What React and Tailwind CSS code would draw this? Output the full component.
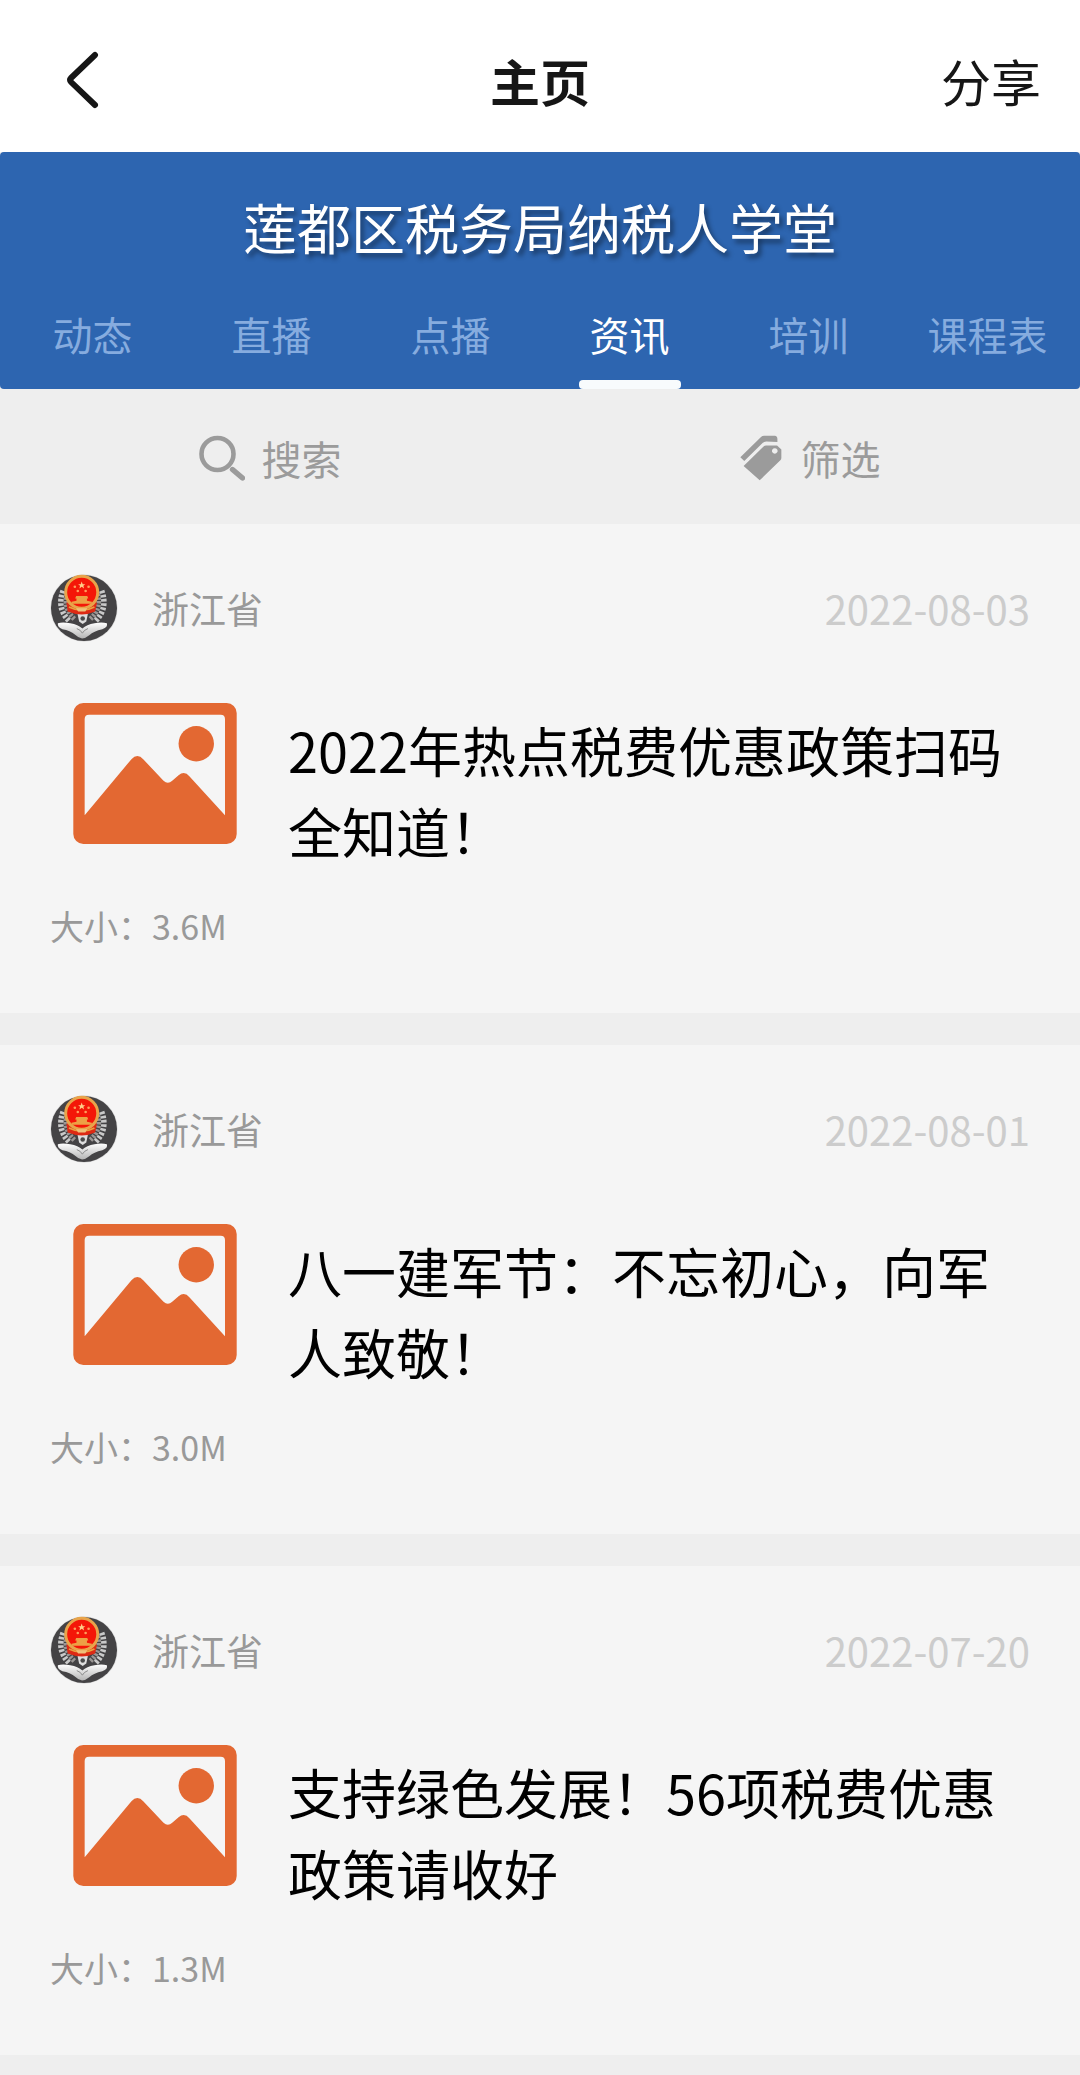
import React from "react";

const TABS = ["动态", "直播", "点播", "资讯", "培训", "课程表"];

const ARTICLES = [
  { source: "浙江省", date: "2022-08-03", title: "2022年热点税费优惠政策扫码全知道！", size: "3.6M" },
  { source: "浙江省", date: "2022-08-01", title: "八一建军节：不忘初心，向军人致敬！", size: "3.0M" },
  { source: "浙江省", date: "2022-07-20", title: "支持绿色发展！56项税费优惠政策请收好", size: "1.3M" },
];

function BackIcon() {
  return (
    <svg viewBox="0 0 34 58" className="h-[58px] w-[34px]" fill="none" stroke="#161616" strokeWidth="6" strokeLinecap="round" strokeLinejoin="round" aria-hidden="true">
      <path d="M30 4 L6 27 Q4 29 6 31 L30 54" />
    </svg>
  );
}

function SearchIcon() {
  return (
    <svg viewBox="0 0 46 46" className="size-[46px]" fill="none" stroke="#9b9b9b" aria-hidden="true">
      <circle cx="18.5" cy="19" r="16" strokeWidth="4.6" />
      <path d="M33.5 34.5 L43.5 43" strokeWidth="5.4" strokeLinecap="round" />
    </svg>
  );
}

function TagIcon() {
  return (
    <svg viewBox="32 18 128 140" className="h-[46px] w-[42px]" fill="#9b9b9b" aria-hidden="true">
      <path d="M33 86 L96 24 Q100 20 105 20 L138 20 Q146 21 146 30 L146 39 L112 38 Q105 38 100 43 L45 97 Z" />
      <path
        fillRule="evenodd"
        d="M43 112 L103 54 Q107 50 112 50 L145 50 L158 62 L158 88 Q158 92 155 95 L92 156 Z M138 58 a8.5 8.5 0 1 0 0.01 0 Z"
      />
    </svg>
  );
}

function PictureIcon() {
  return (
    <svg viewBox="101 68 489 422" className="h-[141px] w-[164px] shrink-0" aria-hidden="true">
      <rect x="101" y="68" width="489" height="422" rx="30" fill="#e36832" />
      <path
        d="M135 404 L135 116 Q135 103 148 103 L542 103 Q555 103 555 116 L555 404 L449 288 Q434 270 416 284 L397 301 Q384 313 371 301 L311 237 Q293 217 275 236 Z"
        fill="#f5f5f5"
      />
      <circle cx="469" cy="190" r="53" fill="#e36832" />
    </svg>
  );
}

function Emblem() {
  return (
    <svg viewBox="26 41 208 208" className="size-[68px] shrink-0" aria-hidden="true">
      <defs>
        <clipPath id="disc">
          <circle cx="130" cy="145" r="101" />
        </clipPath>
        <linearGradient id="hands" x1="0" y1="0" x2="0" y2="1">
          <stop offset="0" stopColor="#ffffff" />
          <stop offset="1" stopColor="#b5b5b5" />
        </linearGradient>
      </defs>
      <circle cx="130" cy="145" r="103" fill="#dcdcdc" />
      <circle cx="130" cy="145" r="101" fill="#444345" />
      <g clipPath="url(#disc)">
        <path d="M66 92 Q46 146 84 184 M184 92 Q204 146 166 184" fill="none" stroke="#c9c9c9" strokeWidth="17" strokeDasharray="8 5" />
        <path d="M78 102 Q66 148 102 180 M172 102 Q184 148 148 180" fill="none" stroke="#9a9694" strokeWidth="15" strokeDasharray="7 4" />
        <path d="M50 192 Q64 186 88 192 Q112 196 125 208 Q138 196 162 192 Q184 186 200 192 Q204 204 186 210 Q160 216 146 228 Q134 238 124 238 Q112 236 102 226 Q88 214 64 210 Q48 204 50 192 Z" fill="url(#hands)" />
        <path d="M108 208 Q120 212 125 222 Q130 212 142 208" fill="none" stroke="#8a8a8a" strokeWidth="3" />
        <path d="M110 162 L142 162 L137 186 L126 194 L115 186 Z" fill="#dedede" />
        <circle cx="126" cy="177" r="7" fill="#4b4b4b" />
        <path d="M76 128 L80 156 Q124 174 164 156 L170 128 Z" fill="#dd2a14" />
        <path d="M84 142 Q124 162 162 142" fill="none" stroke="#e9a23f" strokeWidth="5" />
      </g>
      <circle cx="123" cy="97" r="49" fill="#f41708" stroke="#e8a44b" strokeWidth="9" />
      <path d="M123 64 L126 72 L134 72 L128 77 L130 85 L123 80 L116 85 L118 77 L112 72 L120 72 Z" fill="#ffd08a" />
      <g fill="#ff9d5c">
        <circle cx="102" cy="80" r="4" />
        <circle cx="144" cy="80" r="4" />
        <circle cx="111" cy="93" r="4" />
        <circle cx="135" cy="93" r="4" />
      </g>
      <path d="M106 108 L140 108 L143 116 L139 116 L139 123 L154 126 L154 132 L92 132 L92 126 L107 123 L107 116 L103 116 Z" fill="#eda145" />
      <path d="M106 146 L140 146 L134 156 L112 156 Z" fill="#f0c07a" />
    </svg>
  );
}

function ArticleCard({ article }) {
  return (
    <article className="bg-[#f5f5f5] px-[50px] pt-[50px] pb-[63px]">
      <div className="flex h-[68px] items-center">
        <Emblem />
        <span className="ml-[34px] text-[37px] leading-[48px] text-[#999999]">{article.source}</span>
        <time dateTime={article.date} className="ml-auto text-[40px] leading-[48px] text-[#cccccc]">{article.date}</time>
      </div>
      <a href="#article" className="mt-[61px] flex items-start gap-[51px] pl-[23px]">
        <PictureIcon />
        <h2 className="min-w-0 flex-1 pt-[6px] text-[54px] leading-[81px] text-black">{article.title}</h2>
      </a>
      <p className="mt-[31px] text-[34px] leading-[48px] text-[#999999]">大小：{article.size}</p>
    </article>
  );
}

export default function App() {
  return (
    <div lang="zh-CN" className="min-h-screen bg-[#eeeeee] font-['Noto_Sans_CJK_SC',sans-serif]">
      <header className="grid h-[152px] grid-cols-3 items-center bg-white px-[39px] pt-[8px] text-[#161616]">
        <button type="button" aria-label="返回" className="justify-self-start pl-[26px]">
          <BackIcon />
        </button>
        <h1 className="text-center text-[50px] leading-[60px] font-bold">主页</h1>
        <button type="button" className="justify-self-end text-[50px] leading-[60px]">分享</button>
      </header>

      <section className="rounded-[4px] bg-[#2d65b0] pt-[34px]">
        <p className="text-center text-[54px] leading-[81px] text-white [text-shadow:3px_4px_5px_rgba(0,0,0,0.45)]">莲都区税务局纳税人学堂</p>
        <nav className="mt-[32px] grid h-[90px] grid-cols-6 px-[3px] text-[40px] leading-[60px]">
          {TABS.map((tab) =>
            tab === "资讯" ? (
              <a key={tab} href="#tab" aria-current="page" className="flex flex-col items-center justify-between pt-[5px] whitespace-nowrap text-white">
                {tab}
                <span className="h-[9px] w-[102px] rounded-[4px] bg-[#f8fbfd]" />
              </a>
            ) : (
              <a key={tab} href="#tab" className="pt-[5px] text-center whitespace-nowrap text-[#86acdf]">
                {tab}
              </a>
            )
          )}
        </nav>
      </section>

      <div className="grid h-[135px] grid-cols-2 pt-[2px] text-[40px] leading-[56px] text-[#9b9b9b]">
        <button type="button" className="flex items-center justify-center gap-[17px]">
          <SearchIcon />
          搜索
        </button>
        <button type="button" className="flex items-center justify-center gap-[19px]">
          <TagIcon />
          筛选
        </button>
      </div>

      <main className="flex flex-col gap-[32px]">
        {ARTICLES.map((article) => (
          <ArticleCard key={article.date} article={article} />
        ))}
      </main>
    </div>
  );
}
